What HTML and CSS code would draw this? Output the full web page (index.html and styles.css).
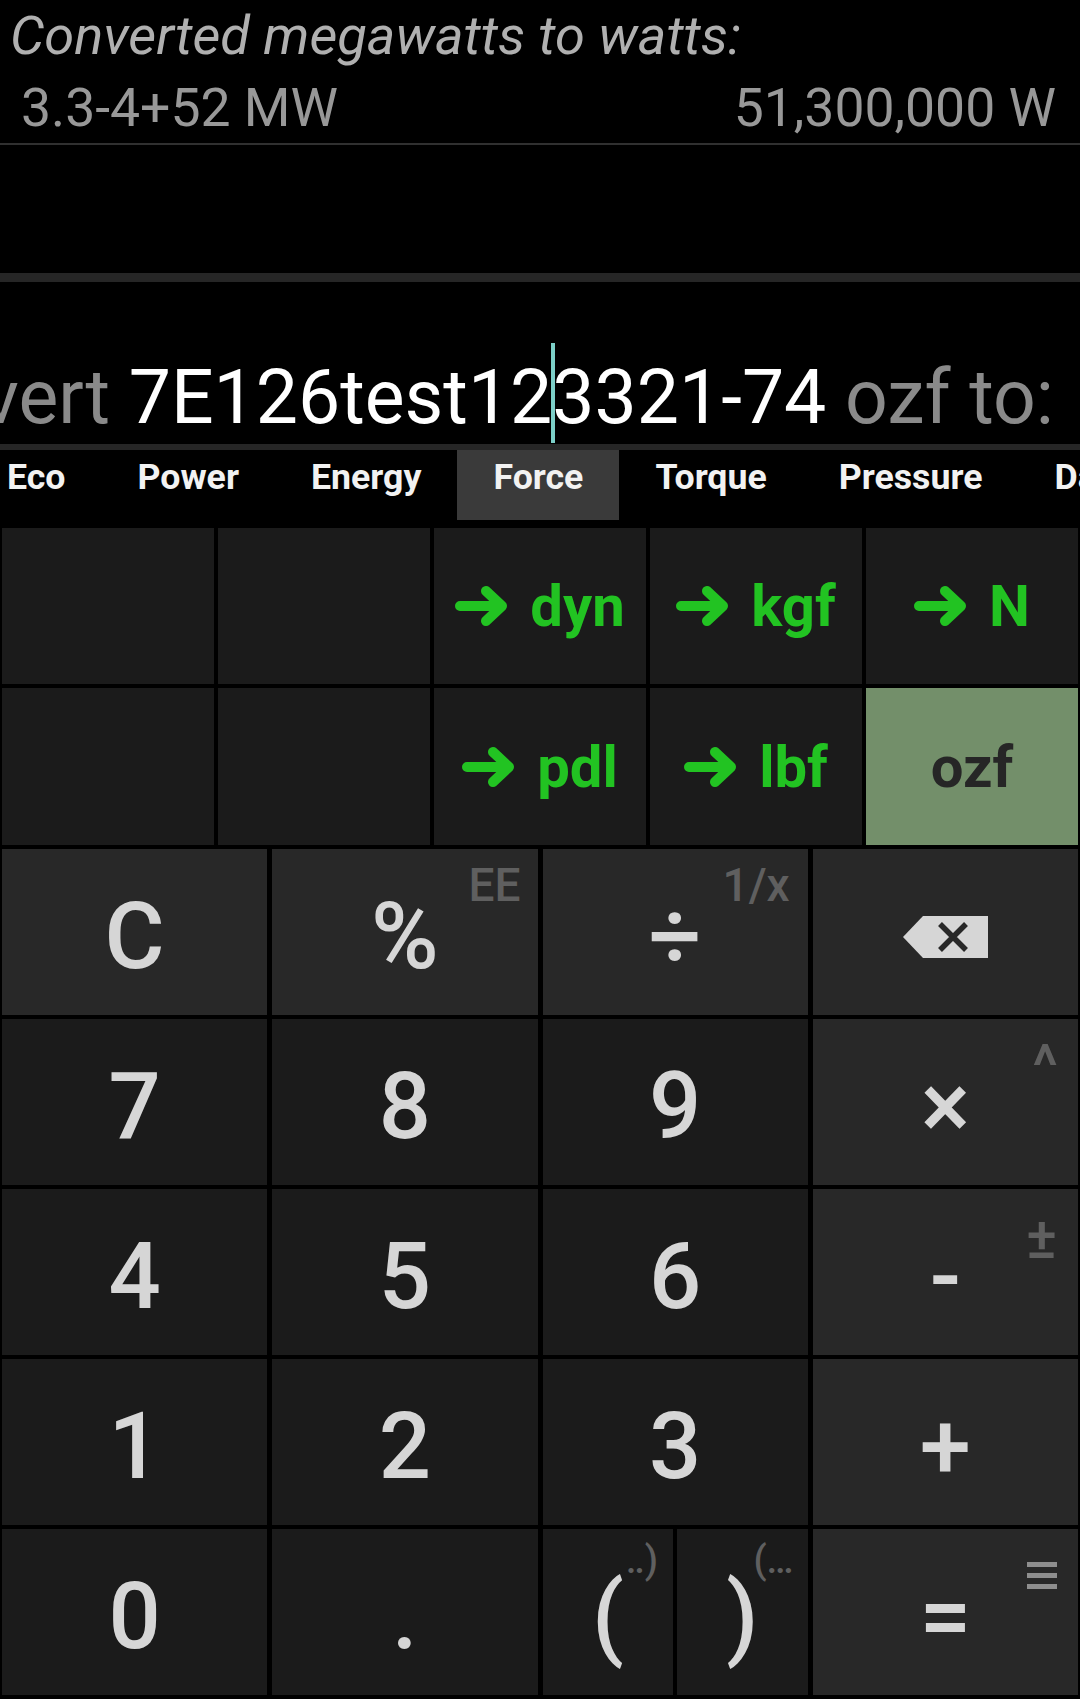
FILE: index.html
```html
<!DOCTYPE html>
<html>
<head>
<meta charset="utf-8">
<link rel="stylesheet" href="styles.css">
</head>
<body>
<div class="screen">
  <div class="title">Converted megawatts to watts:</div>
  <div class="result"><span>3.3-4+52 MW</span><span>51,300,000 W</span></div>
  <div class="divider"></div>
  <div class="history"></div>
  <div class="bar"></div>
  <div class="input">
    <div class="input-text"><span class="muted">Convert </span><span class="value">7E126test12<span class="cursor"></span>3321-74</span><span class="muted"> ozf to:</span></div>
  </div>
  <div class="bar thin"></div>
  <div class="tabs">
    <div class="tab-track">
      <div class="tab">Eco</div>
      <div class="tab">Power</div>
      <div class="tab">Energy</div>
      <div class="tab active">Force</div>
      <div class="tab">Torque</div>
      <div class="tab">Pressure</div>
      <div class="tab">Data</div>
    </div>
  </div>
  <div class="converter">
    <div class="conv"></div>
    <div class="conv"></div>
    <div class="conv"><svg class="arrow" viewBox="0 0 54 40" width="54" height="40"><path d="M5 20 H46 M31 5 L47 20 L31 35" fill="none" stroke="#22c322" stroke-width="10" stroke-linecap="round" stroke-linejoin="round"/></svg><span>dyn</span></div>
    <div class="conv"><svg class="arrow" viewBox="0 0 54 40" width="54" height="40"><path d="M5 20 H46 M31 5 L47 20 L31 35" fill="none" stroke="#22c322" stroke-width="10" stroke-linecap="round" stroke-linejoin="round"/></svg><span>kgf</span></div>
    <div class="conv"><svg class="arrow" viewBox="0 0 54 40" width="54" height="40"><path d="M5 20 H46 M31 5 L47 20 L31 35" fill="none" stroke="#22c322" stroke-width="10" stroke-linecap="round" stroke-linejoin="round"/></svg><span>N</span></div>
    <div class="conv"></div>
    <div class="conv"></div>
    <div class="conv"><svg class="arrow" viewBox="0 0 54 40" width="54" height="40"><path d="M5 20 H46 M31 5 L47 20 L31 35" fill="none" stroke="#22c322" stroke-width="10" stroke-linecap="round" stroke-linejoin="round"/></svg><span>pdl</span></div>
    <div class="conv"><svg class="arrow" viewBox="0 0 54 40" width="54" height="40"><path d="M5 20 H46 M31 5 L47 20 L31 35" fill="none" stroke="#22c322" stroke-width="10" stroke-linecap="round" stroke-linejoin="round"/></svg><span>lbf</span></div>
    <div class="conv selected"><span>ozf</span></div>
  </div>
  <div class="keypad">
    <div class="key op">C</div>
    <div class="key op">%<span class="sec sec-ee">EE</span></div>
    <div class="key op">÷<span class="sec sec-inv">1/x</span></div>
    <div class="key op"><svg width="85" height="42" viewBox="0 0 85 42"><path d="M0 21 L20 0 H85 V42 H20 Z" fill="#d6d6d6"/><path d="M37 8 L63 34 M63 8 L37 34" stroke="#282828" stroke-width="5.5"/></svg></div>

    <div class="key">7</div>
    <div class="key">8</div>
    <div class="key">9</div>
    <div class="key op">×<span class="sec sec-pow">^</span></div>

    <div class="key">4</div>
    <div class="key">5</div>
    <div class="key">6</div>
    <div class="key op">-<span class="sec sec-neg">±</span></div>

    <div class="key">1</div>
    <div class="key">2</div>
    <div class="key">3</div>
    <div class="key op">+</div>

    <div class="key">0</div>
    <div class="key">.</div>
    <div class="pair">
      <div class="key">(<span class="sec sec-open">‥)</span></div>
      <div class="key">)<span class="sec sec-close">(…</span></div>
    </div>
    <div class="key op">=<svg class="sec sec-menu" width="30" height="27" viewBox="0 0 30 27"><rect x="0" y="0" width="30" height="5" fill="#8e8e8e"/><rect x="0" y="11" width="30" height="5" fill="#8e8e8e"/><rect x="0" y="22" width="30" height="5" fill="#8e8e8e"/></svg></div>
  </div>
</div>
</body>
</html>
```

FILE: styles.css
```css
html, body {
  margin: 0;
  padding: 0;
  background: #000;
}

.screen {
  width: 1080px;
  height: 1699px;
  overflow: hidden;
  background: #000;
  font-family: Roboto, "Liberation Sans", sans-serif;
}

.title {
  font-size: 54.2px;
  font-style: italic;
  line-height: 62px;
  padding: 5px 0 0 10px;
  color: #b0b0b0;
  white-space: nowrap;
}

.result {
  display: flex;
  justify-content: space-between;
  font-size: 53.5px;
  line-height: 66px;
  padding: 8px 24px 0 21px;
  color: #989898;
  white-space: nowrap;
}

.divider {
  margin-top: 2px;
  height: 2px;
  background: #303030;
}

.history {
  height: 128px;
}

.bar {
  height: 9px;
  background: #262626;
}

.bar.thin {
  height: 6px;
}

.input {
  height: 162px;
  box-sizing: border-box;
  display: flex;
  justify-content: flex-end;
  align-items: flex-end;
  padding: 0 26px 2px 0;
  overflow: hidden;
  white-space: nowrap;
  font-size: 75.1px;
  line-height: 89px;
}

.input-text {
  flex-shrink: 0;
}

.muted {
  color: #8a8a8a;
}

.value {
  color: #ffffff;
}

.cursor {
  position: relative;
  display: inline-block;
  width: 0;
  height: 0;
}

.cursor::after {
  content: "";
  position: absolute;
  left: -1px;
  top: -80px;
  width: 4px;
  height: 100px;
  background: #7ccfc8;
}

.tabs {
  height: 70px;
  overflow: hidden;
  margin-bottom: 8px;
}

.tab-track {
  display: flex;
  margin-left: -29px;
}

.tab {
  flex-shrink: 0;
  height: 70px;
  padding: 0 36px;
  font-size: 35.7px;
  font-weight: 700;
  line-height: 54px;
  color: #f2f2f2;
}

.tab.active {
  background: #3a3a3a;
}

.converter {
  display: grid;
  grid-template-columns: repeat(5, 1fr);
  grid-template-rows: 156px 157px;
  gap: 4px;
  padding: 0 2px;
}

.conv {
  background: #1b1b1b;
  display: flex;
  align-items: center;
  justify-content: center;
  gap: 21px;
  color: #22c322;
  font-size: 58px;
  font-weight: 700;
  line-height: 1;
}

.conv.selected {
  background: #738f6a;
  color: #262626;
}

.keypad {
  margin-top: 4px;
  display: grid;
  grid-template-columns: repeat(4, 1fr);
  grid-auto-rows: 166px;
  column-gap: 5px;
  row-gap: 4px;
  padding: 0 2px;
}

.key {
  position: relative;
  box-sizing: border-box;
  padding-top: 9px;
  background: #1b1b1b;
  color: #d6d6d6;
  font-size: 92px;
  font-weight: 500;
  line-height: 1;
  display: flex;
  align-items: center;
  justify-content: center;
}

.key.op {
  background: #282828;
}

.pair {
  display: grid;
  grid-template-columns: 1fr 1fr;
  gap: 4px;
}

.sec {
  position: absolute;
  color: #5f5f5f;
  font-size: 46px;
  font-weight: 500;
  line-height: 1;
}

.sec-ee {
  top: 13px;
  right: 17px;
}

.sec-inv {
  top: 13px;
  right: 18px;
}

.sec-pow {
  top: 17px;
  right: 20px;
  font-size: 60px;
}

.sec-neg {
  top: 20px;
  right: 21px;
  font-size: 58px;
}

.sec-open {
  top: 12px;
  left: calc(50% + 18px);
  font-size: 38px;
}

.sec-close {
  top: 12px;
  left: calc(50% + 11px);
  font-size: 38px;
}

.sec-menu {
  top: 33px;
  right: 21px;
}
```
